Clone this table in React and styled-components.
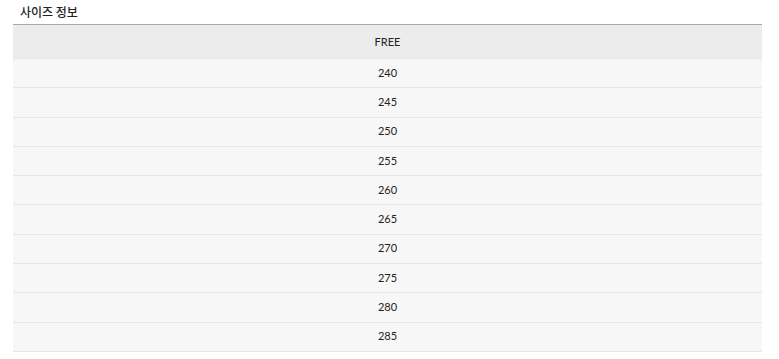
import React from 'react';
import styled, { createGlobalStyle } from 'styled-components';

const Global = createGlobalStyle`
	body {
		margin: 0;
		background: #fff;
		font-family: Lato, "Noto Sans CJK KR", sans-serif;
	}
`;

const Wrap = styled.div`
	padding: 5px 17px 0 13px;
`;

const Title = styled.h3`
	margin: 0 0 5px 7px;
	font-size: 12px;
	font-weight: 500;
	line-height: 14px;
	color: #222;
	font-family: "Noto Sans CJK KR", sans-serif;
`;

const Table = styled.table`
	width: 100%;
	border-collapse: collapse;
	border-top: 1px solid #a8a8a8;
`;

const Head = styled.th`
	height: 33px;
	padding: 0;
	background: #ececec;
	font-size: 11px;
	font-weight: 400;
	color: #222;
	text-align: center;
`;

const Cell = styled.td`
	height: 29.3px;
	padding: 0 0 2px;
	background: #f7f7f7;
	border-top: 1px solid #e6e6e6;
	border-bottom: 1px solid #e6e6e6;
	font-size: 11px;
	color: #222;
	text-align: center;
	box-sizing: border-box;
`;

const sizes = [240, 245, 250, 255, 260, 265, 270, 275, 280, 285];

export default function App() {
	return (
		<Wrap>
			<Global />
			<Title>사이즈 정보</Title>
			<Table>
				<thead>
					<tr>
						<Head>FREE</Head>
					</tr>
				</thead>
				<tbody>
					{sizes.map(s => (
						<tr key={s}>
							<Cell>{s}</Cell>
						</tr>
					))}
				</tbody>
			</Table>
		</Wrap>
	);
}
